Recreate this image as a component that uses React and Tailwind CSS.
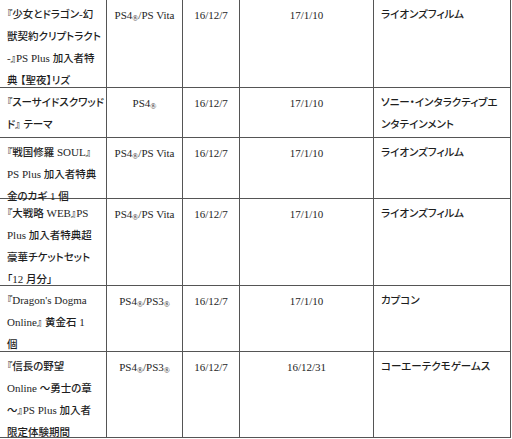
import React from "react";

function Txt({ s }) {
  const parts = s.split(/([\x20-\x7E]+)/).filter((p) => p.length);
  return (
    <>
      {parts.map((p, i) =>
        /^[\x20-\x7E]+$/.test(p) ? (
          <span key={i} className="text-[11px] [font-family:'Liberation_Serif',serif]">{p}</span>
        ) : (
          <span key={i} className="text-[10.5px] font-medium [font-family:'Noto_Sans_CJK_JP',sans-serif] [font-feature-settings:'palt']">{p}</span>
        )
      )}
    </>
  );
}

function PS({ v }) {
  return (
    <span className="text-[11px] [font-family:'Liberation_Serif',serif] whitespace-nowrap">
      {v.map((p, i) =>
        p === "R" ? (
          <span key={i} className="text-[8px] align-[-2px]">®</span>
        ) : (
          <span key={i}>{p}</span>
        )
      )}
    </span>
  );
}

const rows = [
  {
    h: "h-[88px]",
    title: ["『少女とドラゴン-幻", "獣契約クリプトラクト", "-』PS Plus 加入者特", "典 【聖夜】リズ"],
    plat: ["PS4", "R", "/PS Vita"],
    start: "16/12/7",
    end: "17/1/10",
    co: ["ライオンズフィルム"],
  },
  {
    h: "h-[50px]",
    title: ["『スーサイドスクワッド", "ド』 テーマ"],
    plat: ["PS4", "R"],
    start: "16/12/7",
    end: "17/1/10",
    co: ["ソニー・インタラクティブエ", "ンタテインメント"],
  },
  {
    h: "h-[61px]",
    title: ["『戦国修羅 SOUL』", "PS Plus 加入者特典", "金のカギ 1 個"],
    plat: ["PS4", "R", "/PS Vita"],
    start: "16/12/7",
    end: "17/1/10",
    co: ["ライオンズフィルム"],
  },
  {
    h: "h-[87px]",
    title: ["『大戦略 WEB』PS", "Plus 加入者特典超", "豪華チケットセット", "「12 月分」"],
    plat: ["PS4", "R", "/PS Vita"],
    start: "16/12/7",
    end: "17/1/10",
    co: ["ライオンズフィルム"],
  },
  {
    h: "h-[66px]",
    title: ["『Dragon's Dogma", "Online』 黄金石 1", "個"],
    plat: ["PS4", "R", "/PS3", "R"],
    start: "16/12/7",
    end: "17/1/10",
    co: ["カプコン"],
  },
  {
    h: "h-[86px]",
    title: ["『信長の野望", "Online ～勇士の章", "～』PS Plus 加入者", "限定体験期間"],
    plat: ["PS4", "R", "/PS3", "R"],
    start: "16/12/7",
    end: "16/12/31",
    co: ["コーエーテクモゲームス"],
  },
];

export default function App() {
  return (
    <div className="w-[512px] h-[439px] bg-white overflow-hidden text-[#1e1e1e]">
      <div className="w-[511px] border-r border-[#555]">
        {rows.map((r, i) => (
          <div key={i} className={`flex border-b border-[#555] ${r.h}`}>
            <div className="w-[107px] shrink-0 border-r border-[#555] pl-[7px] pt-[1px] leading-[22px]">
              {r.title.map((t, j) => (
                <div key={j} className="whitespace-nowrap h-[22px]">
                  <Txt s={t} />
                </div>
              ))}
            </div>
            <div className="w-[76px] shrink-0 border-r border-[#555] text-center pt-[2px] leading-[22px]">
              <PS v={r.plat} />
            </div>
            <div className="w-[57px] shrink-0 border-r border-[#555] text-center pt-[2px] leading-[22px]">
              <span className="text-[11px] [font-family:'Liberation_Serif',serif]">{r.start}</span>
            </div>
            <div className="w-[134px] shrink-0 border-r border-[#555] text-center pt-[2px] leading-[22px]">
              <span className="text-[11px] [font-family:'Liberation_Serif',serif]">{r.end}</span>
            </div>
            <div className="flex-1 pl-[7px] pt-[1px] leading-[22px]">
              {r.co.map((t, j) => (
                <div key={j} className="whitespace-nowrap h-[22px]">
                  <Txt s={t} />
                </div>
              ))}
            </div>
          </div>
        ))}
      </div>
    </div>
  );
}
